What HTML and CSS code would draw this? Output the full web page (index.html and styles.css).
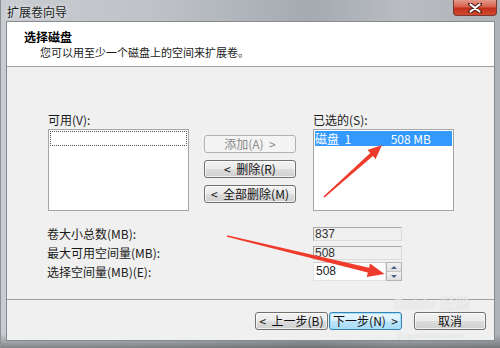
FILE: index.html
```html
<!DOCTYPE html>
<html lang="zh-CN">
<head>
<meta charset="utf-8">
<title>扩展卷向导</title>
<link rel="stylesheet" href="styles.css">
</head>
<body>
<div class="window">
  <div class="titlebar">
    <span class="title">扩展卷向导</span>
    <div class="close">
      <svg width="14" height="10" viewBox="0 0 14 10"><path d="M2 1 L12 9 M12 1 L2 9" stroke="#4a1e16" stroke-width="4" stroke-linecap="round"/><path d="M2.5 1.5 L11.5 8.5 M11.5 1.5 L2.5 8.5" stroke="#fff" stroke-width="2.2" stroke-linecap="round"/></svg>
    </div>
  </div>
  <div class="client">
    <div class="header">
      <div class="h-title">选择磁盘</div>
      <div class="h-sub">您可以用至少一个磁盘上的空间来扩展卷。</div>
    </div>
    <div class="main">
      <div class="lists">
        <div class="col">
          <div class="lbl">可用(V):</div>
          <div class="listbox"><div class="focus-row"></div></div>
        </div>
        <div class="btncol">
          <div class="btn disabled">添加(A)&nbsp;&nbsp;&gt;</div>
          <div class="btn">&lt;&nbsp;&nbsp;删除(R)</div>
          <div class="btn">&lt;&nbsp;&nbsp;全部删除(M)</div>
        </div>
        <div class="col">
          <div class="lbl">已选的(S):</div>
          <div class="listbox"><div class="sel-row"><span>磁盘&nbsp;&nbsp;1</span><span class="size">508 MB</span></div></div>
        </div>
      </div>
      <div class="fields">
        <div class="flabel">卷大小总数(MB):</div>
        <div class="ro">837</div>
        <div class="flabel">最大可用空间量(MB):</div>
        <div class="ro">508</div>
        <div class="flabel">选择空间量(MB)(E):</div>
        <div class="spin">
          <div class="spin-text">508</div>
          <div class="spin-btns">
            <div class="sb up"><span></span></div>
            <div class="sb down"><span></span></div>
          </div>
        </div>
      </div>
    </div>
    <div class="footer">
      <div class="btn fbtn">&lt;&nbsp;&nbsp;上一步(B)</div>
      <div class="btn fbtn default">下一步(N)&nbsp;&nbsp;&gt;</div>
      <div class="btn fbtn cancel">取消</div>
    </div>
  </div>
</div>
<div class="watermark wm-top">Baidu 经验</div>
<div class="watermark wm-bottom">jingyan.baidu.com</div>
<svg class="arrows" width="500" height="348" viewBox="0 0 500 348">
  <polygon points="323.4,196.4 370.3,152.9 367.6,149.9 382,145 375.6,158.9 372.9,155.9 324.6,197.6" fill="#ef3b2c"/>
  <polygon points="227.1,235.3 369.0,267.8 370.0,263.4 384.5,274 366.8,277.0 367.8,272.6 226.9,236.7" fill="#ef3b2c"/>
</svg>
</body>
</html>
```
FILE: styles.css
```css
* { box-sizing: border-box; }
html, body { margin: 0; padding: 0; }
body {
  width: 500px;
  height: 348px;
  overflow: hidden;
  position: relative;
  font-family: "Noto Sans CJK SC", "Liberation Sans", sans-serif;
  font-size: 12px;
  color: #1a1a1a;
  background: #aeb2b7;
}
.window {
  width: 500px;
  height: 348px;
  display: flex;
  flex-direction: column;
  background:
    linear-gradient(180deg, rgba(255,255,255,0) 0%, rgba(255,255,255,0) 96%, rgba(60,60,60,0.5) 100%),
    linear-gradient(90deg, #c9cdd2 0%, #bfc3c8 30%, #a4aab0 62%, #b9bdc2 80%, #aeb3b8 100%);
  border-left: 1px solid #8d9095;
}
.titlebar {
  height: 22px;
  display: flex;
  align-items: flex-start;
  padding-left: 6px;
  padding-right: 3px;
}
.title {
  line-height: 24px;
  font-size: 12px;
  color: #1c1c1c;
  text-shadow: 0 0 4px rgba(255,255,255,0.9);
}
.close {
  margin-left: auto;
  width: 44px;
  height: 16px;
  border: 1px solid #7a3a33;
  border-top: none;
  border-radius: 0 0 4px 4px;
  background: linear-gradient(180deg, #e39a8c 0%, #d6604c 45%, #c2301c 55%, #d2482e 100%);
  display: flex;
  align-items: center;
  justify-content: center;
}
.close svg { display: block; }
.client {
  flex: 1;
  margin: 0 6px 8px 6px;
  display: flex;
  flex-direction: column;
  background: #f0f0f0;
  box-shadow: 0 0 0 1px #868b90;
}
.header {
  height: 45px;
  background: #fff;
  border-bottom: 1px solid #a0a0a0;
  padding: 8px 0 0 17px;
}
.h-title {
  font-weight: bold;
  font-size: 12px;
  line-height: 14px;
  color: #000;
}
.h-sub {
  font-size: 11px;
  line-height: 13px;
  margin-top: 2px;
  padding-left: 16px;
  color: #1a1a1a;
}
.main {
  height: 233px;
  border-bottom: 1px solid #a0a0a0;
  padding: 46px 0 0 41px;
}
.lists {
  display: flex;
  align-items: flex-start;
}
.col {
  display: flex;
  flex-direction: column;
  width: 141px;
}
.lbl {
  line-height: 14px;
  height: 14px;
  margin-bottom: 2px;
}
.listbox {
  height: 82px;
  background: #fff;
  border: 1px solid #a5a5a5;
  padding: 1px;
}
.focus-row {
  height: 15px;
  border: 1px dotted #555;
}
.sel-row {
  height: 15px;
  background: #3399ff;
  color: #fff;
  display: flex;
  line-height: 15px;
}
.sel-row .size { margin-left: auto; margin-right: 21px; }
.btncol {
  display: flex;
  flex-direction: column;
  gap: 7px;
  margin: 22px 17px 0 15px;
  width: 92px;
}
.btn {
  height: 18px;
  border: 1px solid #707070;
  border-radius: 3px;
  background: linear-gradient(180deg, #f2f2f2 0%, #ebebeb 48%, #dddddd 52%, #cfcfcf 100%);
  box-shadow: inset 0 0 0 1px rgba(255,255,255,0.7);
  display: flex;
  align-items: center;
  justify-content: center;
  line-height: 16px;
  color: #111;
  white-space: nowrap;
}
.btn.disabled {
  border-color: #adb2b5;
  background: #f4f4f4;
  box-shadow: none;
  color: #8a8a8a;
}
.fields {
  margin-top: 13px;
  display: grid;
  grid-template-columns: 265px 89px;
  grid-auto-rows: 19px;
  align-items: center;
}
.flabel { line-height: 14px; margin-left: -1px; }
.ro {
  height: 14px;
  border: 1px solid #a9a9a9;
  border-right-color: #dcdcdc;
  border-bottom-color: #dcdcdc;
  background: #f0f0f0;
  font-family: "Liberation Sans", sans-serif;
  font-size: 12px;
  line-height: 12px;
  padding-left: 1px;
  color: #333;
}
.spin {
  height: 19px;
  display: flex;
}
.spin-text {
  flex: 1;
  background: #fff;
  border: 1px solid #e3e3e3;
  border-top-color: #c9c9c9;
  font-family: "Liberation Sans", sans-serif;
  font-size: 12px;
  line-height: 17px;
  padding-left: 2px;
  color: #222;
}
.spin-btns {
  width: 16px;
  display: flex;
  flex-direction: column;
  border: 1px solid #b4b4b4;
}
.sb {
  flex: 1;
  display: flex;
  align-items: center;
  justify-content: center;
  background: linear-gradient(180deg, #f3f3f3, #dedede);
}
.sb.up { border-bottom: 1px solid #c4c4c4; }
.sb span {
  width: 0;
  height: 0;
  border-left: 3px solid transparent;
  border-right: 3px solid transparent;
}
.sb.up span { border-bottom: 3px solid #4a5f86; }
.sb.down span { border-top: 3px solid #4a5f86; }
.footer {
  flex: 1;
  display: flex;
  justify-content: flex-end;
  align-items: flex-start;
  padding: 12px 8px 0 0;
}
.fbtn { width: 73px; }
.fbtn + .fbtn { margin-left: 1px; }
.fbtn.cancel { margin-left: 12px; width: 72px; }
.fbtn.default {
  border-color: #3c7fb1;
  box-shadow: inset 0 0 0 1px #9fe2fb;
  background: linear-gradient(180deg, #eaf6fd 0%, #d9f0fc 48%, #bee6fd 52%, #a7d9f5 100%);
}
.watermark {
  position: absolute;
  pointer-events: none;
  font-family: "Liberation Sans", sans-serif;
  color: rgba(255,255,255,0.6);
  text-shadow: 0 0 1px rgba(140,140,140,0.35);
  white-space: nowrap;
}
.wm-top {
  left: 394px;
  top: 295px;
  font-size: 15px;
  font-weight: bold;
  line-height: 17px;
}
.wm-bottom {
  left: 398px;
  top: 331px;
  font-size: 8px;
  line-height: 9px;
}
.arrows {
  position: absolute;
  left: 0;
  top: 0;
  pointer-events: none;
}
```
